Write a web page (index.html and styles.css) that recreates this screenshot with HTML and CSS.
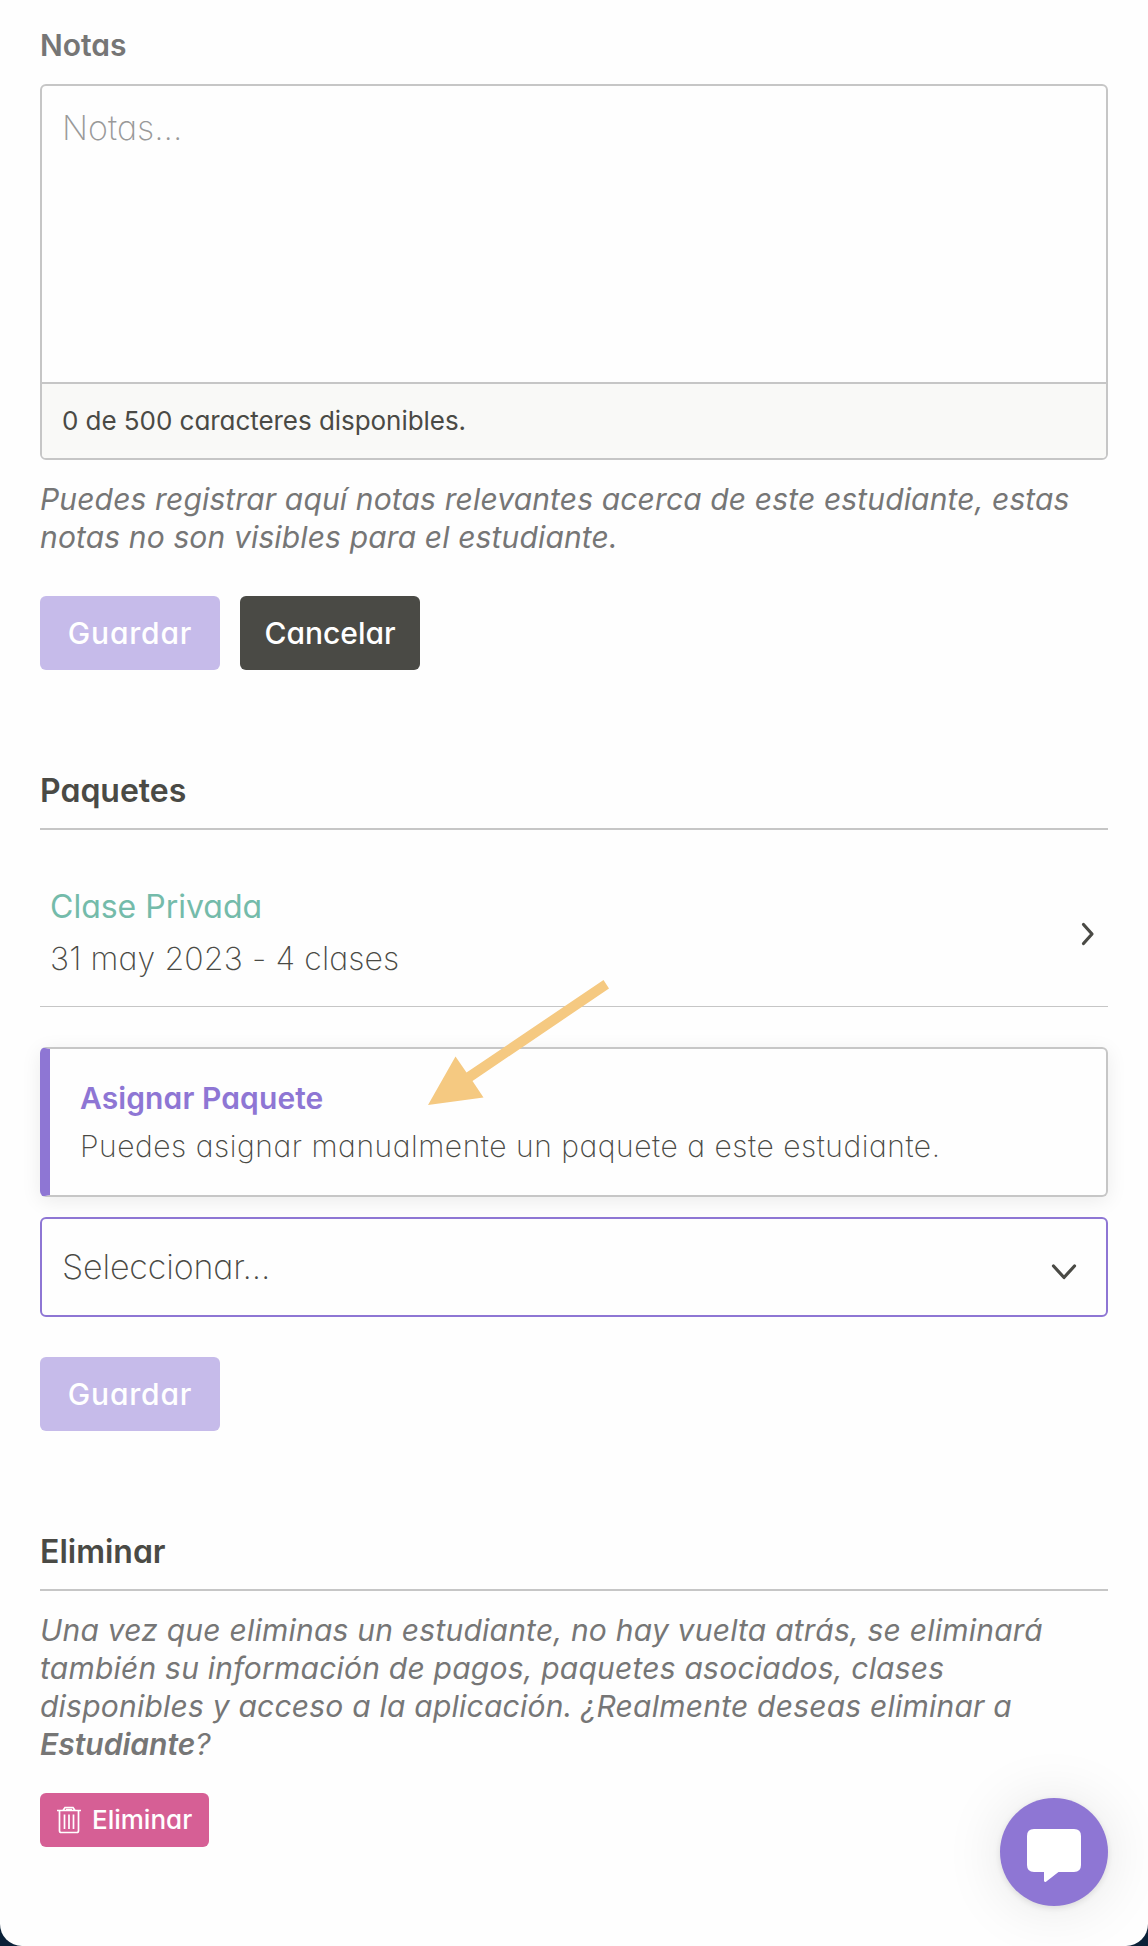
FILE: index.html
```html
<!DOCTYPE html>
<html lang="es">

<head>
    <meta charset="UTF-8">
    <meta name="viewport" content="width=device-width, initial-scale=1.0">
    <title>Estudiante</title>

    <link rel="stylesheet" href="styles.css">
</head>

<body>
    <main class="page">
        <form class="notes">
            <label class="label" for="notes">Notas</label>
            <div class="notes-box">
                <textarea id="notes" placeholder="Notas..."></textarea>
                <div class="counter">0 de 500 caracteres disponibles.</div>
            </div>
            <p class="hint">
                Puedes registrar aquí notas relevantes acerca de este estudiante, estas<br>
                notas no son visibles para el estudiante.
            </p>
            <div class="buttons">
                <button type="button" class="btn btn-primary" disabled>Guardar</button>
                <button type="button" class="btn btn-dark">Cancelar</button>
            </div>
        </form>

        <section>
            <h2 class="title">Paquetes</h2>
            <a class="package">
                <div>
                    <div class="package-name">Clase Privada</div>
                    <div class="package-info">31 may 2023 - 4 clases</div>
                </div>
                <svg class="chevron-right" width="14" height="24" viewBox="0 0 14 24">
                    <path d="M2.500 2.500l8.500 9.500-8.500 9.500" />
                </svg>
            </a>
            <div class="card">
                <div class="card-title">Asignar Paquete</div>
                <div class="card-text">Puedes asignar manualmente un paquete a este estudiante.</div>
            </div>
            <div class="select">
                <span>Seleccionar...</span>
                <svg class="chevron-down" width="26" height="18" viewBox="0 0 26 18">
                    <path d="M2.500 3l10.500 11.500L23.500 3" />
                </svg>
            </div>
            <button type="button" class="btn btn-primary" disabled>Guardar</button>
        </section>

        <section>
            <h2 class="title">Eliminar</h2>
            <p class="hint hint-delete">
                Una vez que eliminas un estudiante, no hay vuelta atrás, se eliminará<br>
                también su información de pagos, paquetes asociados, clases<br>
                disponibles y acceso a la aplicación. ¿Realmente deseas eliminar a<br>
                <strong>Estudiante</strong>?
            </p>
            <button type="button" class="btn-delete">
                <svg width="24" height="28" viewBox="0 0 24 28">
                    <path d="M0 4.500h24M2.500 4.500v20.300q0 1.700 1.700 1.700h15.600q1.700 0 1.700-1.700V4.500M6 4.500l2-3h8l2 3M9 3.500h6M7.500 8.500v14.500M12 8.500v14.500M16.500 8.500v14.500" />
                </svg>
                <span>Eliminar</span>
            </button>
        </section>

        <button type="button" class="chat">
            <svg width="54" height="54" viewBox="0 0 54 54">
                <path d="M7 0h40q7 0 7 7v29q0 7-7 7H31.500L19 52.700q-2 .8-2-1.200V43H7q-7 0-7-7V7q0-7 7-7z" />
            </svg>
        </button>

        <!-- flecha hacia "Asignar Paquete" -->
        <svg class="arrow" width="182" height="126" viewBox="0 0 182 126">
            <path d="M0 125L27.500 76.500l11 16L175.500 0l5.500 8.500L44.500 101l11 16.500z" />
        </svg>
    </main>
</body>

</html>
```
FILE: styles.css
```css
* {
    box-sizing: border-box;
}

body {
    margin: 0;
    background-color: #0b2138;
    color: #4a4a45;
    font-family: Inter, sans-serif;
    font-feature-settings: "cv11";
    font-size: 30px;
    line-height: 38px;
}

.page {
    position: relative;
    height: 1946px;
    padding: 26px 40px 0;
    background-color: #fefefe;
    border-radius: 0 0 22px 22px;
    overflow: hidden;
    white-space: nowrap;
}

.label {
    display: block;
    margin-bottom: 20px;
    color: #767676;
    font-weight: 600;
}

.notes-box {
    border: 2px solid #c6c6c6;
    border-radius: 6px;
    overflow: hidden;
}

.notes-box textarea {
    display: block;
    width: 100%;
    height: 296px;
    padding: 20px;
    border: 0;
    background: none;
    resize: none;
    font-family: inherit;
    font-size: 34px;
    font-weight: 200;
    line-height: 44px;
    font-feature-settings: inherit;
}

.notes-box textarea::placeholder {
    color: #999;
}

.counter {
    display: flex;
    align-items: center;
    height: 76px;
    padding: 0 20px;
    border-top: 2px solid #c6c6c6;
    background-color: #f9f9f7;
    font-size: 26px;
    letter-spacing: -0.05px;
}

.hint {
    margin: 20px 0 0;
    color: #767676;
    font-style: italic;
    letter-spacing: 0.14px;
}

.hint-delete {
    letter-spacing: 0.22px;
}

.hint strong {
    font-weight: 600;
    letter-spacing: 0;
}

.buttons {
    display: flex;
    gap: 20px;
}

.btn {
    display: block;
    width: 180px;
    height: 74px;
    margin-top: 40px;
    padding: 0;
    border: 0;
    border-radius: 6px;
    color: #fff;
    font: inherit;
    font-weight: 550;
    font-feature-settings: inherit;
}

.btn-primary {
    background-color: #c6bbea;
    letter-spacing: 0.8px;
}

.btn-dark {
    background-color: #4a4a45;
}

.title {
    margin: 101px 0 0;
    padding-bottom: 17px;
    border-bottom: 2px solid #c6c6c6;
    font-size: 32px;
    font-weight: 600;
    line-height: 40px;
}

.package {
    display: flex;
    align-items: center;
    justify-content: space-between;
    padding: 51px 13px 21px 10px;
    border-bottom: 1px solid #c6c6c6;
    font-size: 32px;
    line-height: 52px;
}

.package svg {
    margin-top: 2px;
}

.package-name {
    color: #74bbaa;
}

.package-info {
    font-weight: 200;
    letter-spacing: 0.13px;
}

.chevron-right,
.chevron-down {
    fill: none;
    stroke: #4a4a45;
    stroke-width: 3.200;
    stroke-linecap: round;
    stroke-linejoin: round;
}

.card {
    margin: 40px 0 20px;
    padding: 25px 30px;
    border: 2px solid #c6c6c6;
    border-left: 10px solid #8e76d4;
    border-radius: 6px;
    box-shadow: 0 4px 20px rgba(0, 0, 0, 0.08);
    line-height: 48px;
}

.card-title {
    color: #8e76d4;
    font-weight: 600;
    letter-spacing: 0.1px;
}

.card-text {
    font-weight: 200;
    letter-spacing: 0.54px;
}

.select {
    display: flex;
    align-items: center;
    justify-content: space-between;
    height: 100px;
    padding: 0 29px 0 20px;
    border: 2px solid #8e76d4;
    border-radius: 6px;
    background-color: #fefefe;
    font-size: 34px;
    font-weight: 200;
    letter-spacing: -0.15px;
}

.select svg {
    margin-top: 9px;
}

.btn-delete {
    display: flex;
    align-items: center;
    gap: 11px;
    width: 169px;
    height: 54px;
    margin-top: 30px;
    padding: 0 17px;
    border: 0;
    border-radius: 6px;
    background-color: #d65f95;
    color: #fff;
    font: inherit;
    font-size: 26px;
    font-weight: 500;
    font-feature-settings: inherit;
}

.btn-delete svg {
    flex-shrink: 0;
    fill: none;
    stroke: #fff;
    stroke-width: 1.700;
}

.chat {
    position: absolute;
    right: 40px;
    bottom: 40px;
    width: 108px;
    height: 108px;
    padding: 8px 0 0;
    border: 0;
    border-radius: 50%;
    background-color: #8e76d4;
    box-shadow: 0 2px 6px rgba(0, 0, 0, 0.1), 0 2px 60px rgba(0, 0, 0, 0.1);
}

.chat svg {
    display: block;
    margin: auto;
    fill: #fff;
}

.arrow {
    position: absolute;
    top: 980px;
    left: 428px;
    fill: #f5c981;
}
```
